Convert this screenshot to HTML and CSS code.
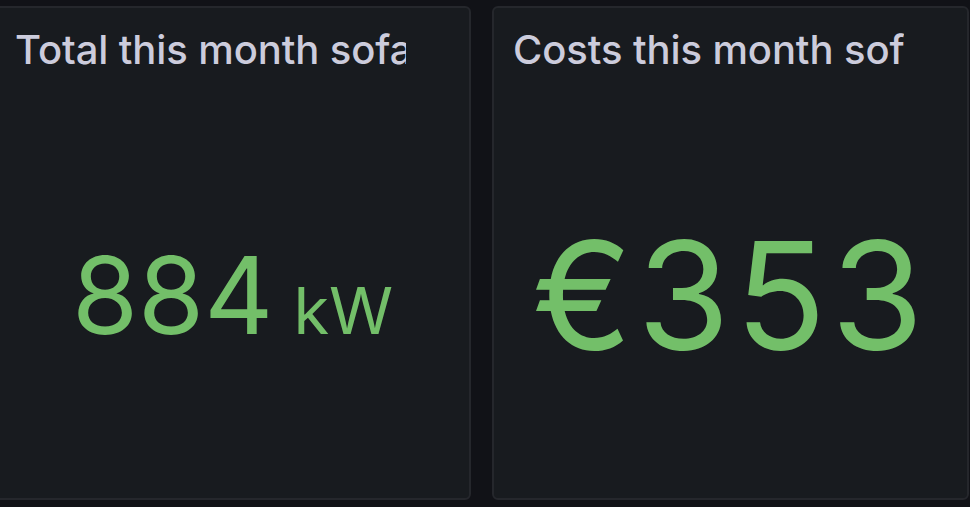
FILE: index.html
```html
<!DOCTYPE html>
<html>
<head>
<meta charset="utf-8">
<link rel="stylesheet" href="styles.css">
</head>
<body>
<div class="grid">
  <section class="panel">
    <header class="panel-header"><h2 class="panel-title">Total this month sofar</h2></header>
    <div class="panel-body">
      <span class="stat-value stat-small">884<span class="stat-unit">kW</span></span>
    </div>
  </section>
  <section class="panel">
    <header class="panel-header"><h2 class="panel-title">Costs this month sofar</h2></header>
    <div class="panel-body">
      <span class="stat-value stat-large">€353</span>
    </div>
  </section>
</div>
</body>
</html>
```
FILE: styles.css
```css
html, body {
  margin: 0;
  padding: 0;
  background: #111217;
  overflow: hidden;
}
body {
  width: 970px;
  height: 507px;
  font-family: Inter, "Noto Sans", sans-serif;
}
.grid {
  display: flex;
  gap: 21px;
  padding-top: 6px;
  margin-left: -6px;
  height: 494px;
}
.panel {
  box-sizing: border-box;
  width: 477px;
  height: 494px;
  background: #181b1f;
  border: 2px solid #25272c;
  border-radius: 6px;
  display: flex;
  flex-direction: column;
}
.panel-header {
  box-sizing: border-box;
  height: 90px;
  flex: none;
  display: flex;
  align-items: center;
  padding: 0 63px 6px 19px;
}
.panel-title {
  margin: 0;
  font-size: 40px;
  font-weight: 500;
  letter-spacing: -0.1px;
  color: #ccccdc;
  white-space: nowrap;
  overflow: hidden;
  text-overflow: clip;
  line-height: 1.2;
}
.panel-body {
  flex: 1;
  display: flex;
  align-items: center;
  justify-content: center;
  padding-bottom: 5px;
}
.stat-value {
  color: #73bf69;
  font-weight: 400;
  line-height: 1;
  white-space: nowrap;
}
.stat-small {
  font-size: 107px;
}
.stat-unit {
  font-size: 65px;
  margin-left: 20px;
}
.stat-large {
  font-size: 150px;
  letter-spacing: 5px;
}
```
